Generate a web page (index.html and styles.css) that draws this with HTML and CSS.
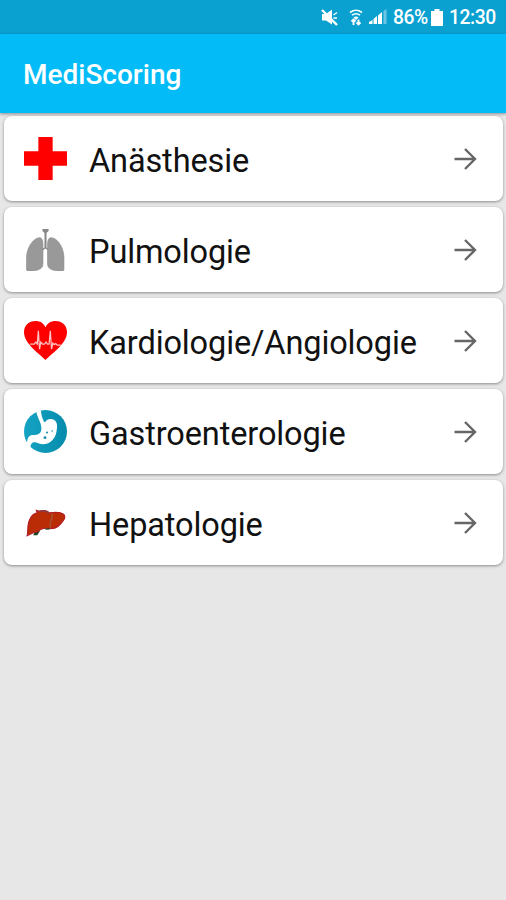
FILE: index.html
```html
<!DOCTYPE html>
<html lang="de">
  <head>
    <meta charset="UTF-8" />
    <meta name="viewport" content="width=device-width, initial-scale=1.0" />
    <title>MediScoring</title>
    <link rel="stylesheet" href="styles.css">
  </head>
  <body>
    <!-- Status Bar -->
    <div class="status-bar">
      <svg class="status-mute" width="17" height="17" viewBox="0 0 17 17" fill="#fff">
        <path d="M1 5h4l6-4.500v15L5 11.500H1z" />
        <path d="M12.500 6l3.500-2.500M12.500 9h3.500" stroke="#fff" stroke-width="1.300" />
        <path d="M1 1l15 15" stroke="#fff" stroke-width="2.400" />
      </svg>
      <svg class="status-wifi" width="14" height="17" viewBox="0 0 14 17" fill="none" stroke="#fff">
        <path d="M1 3.500q6-4.500 12 0M3 6.200q4-3 8 0" stroke-width="1.600" />
        <path d="M4.500 8.500q2.500-1.800 5 0L7 11z" fill="#fff" stroke="none" />
        <path d="M4.500 16v-5M2.500 12.500l2-2 2 2M9.500 10.500v5M7.500 13.500l2 2 2-2" stroke-width="1.900" />
      </svg>
      <svg class="status-signal" width="18" height="16" viewBox="0 0 18 16" fill="#fff">
        <path d="M0 15v-2l3.500-2v4zM4.500 15v-5L8 7v8zM9 15V6.500L13 3v12z" />
        <path d="M14.500 15V2L17.500 0v15z" opacity=".4" />
      </svg>
      <span class="status-percent">86%</span>
      <svg class="status-battery" width="12" height="17" viewBox="0 0 12 17" fill="#fff">
        <path d="M3.500 0h5v2H12v15H0V2h3.500z" />
      </svg>
      <span class="status-time">12:30</span>
    </div>

    <!-- App Bar -->
    <header class="app-bar">
      <h1>MediScoring</h1>
    </header>

    <!-- Category List -->
    <main class="category-list">
      <a href="#" class="category">
        <svg class="category-icon" viewBox="0 0 42 42">
          <path d="M14 0h14v14h14v14H28v14H14V28H0V14h14z" fill="#fe0000" />
        </svg>
        <span class="category-name">Anästhesie</span>
        <svg class="arrow" viewBox="0 0 24 24">
          <path d="M1.500 12h20.500M12 2l10 10-10 10" />
        </svg>
      </a>
      <a href="#" class="category">
        <svg class="category-icon" viewBox="0 0 42 42" fill="#999">
          <path d="M18 1h6v2l-2 2v14l4 3-1 1-4-3-4 3-1-1 4-3V5l-2-2z" fill="#888" />
          <path d="M15.500 9.500C10 9 3 18 2.500 28v13c1 2 7 1 11 0 4-1.500 5-3 5-7V17c0-4-.5-7-3-7.500z" stroke="#888" stroke-width=".6" />
          <path d="M26 9.500C32 9 38.500 18 39 28v13c-1 2-7 1-11 0-4-1.500-5-3-5-7V17c0-4 .5-7 3-7.500z" stroke="#888" stroke-width=".6" />
        </svg>
        <span class="category-name">Pulmologie</span>
        <svg class="arrow" viewBox="0 0 24 24">
          <path d="M1.500 12h20.500M12 2l10 10-10 10" />
        </svg>
      </a>
      <a href="#" class="category">
        <svg class="category-icon" viewBox="0 0 42 42">
          <path d="M21 40C15 34 0 24 0 13 0 6 5 2 11 2c5 0 8 2 10 6 2-4 5-6 10-6 6 0 11 4 11 11 0 11-15 21-21 27z" fill="#fe0000" />
          <path d="M6 24.500h4l1.500-2 1.500 2 1-13 1.200 18 1.200-7 1.600 2h2l1.500-2 1.500 2h1.500l1.200-13 1.200 18 1.200-6 1.400 1.500 1.500-1 1.500 1.500h3.500" fill="none" stroke="#ffc4c4" stroke-width="1.200" />
        </svg>
        <span class="category-name">Kardiologie/Angiologie</span>
        <svg class="arrow" viewBox="0 0 24 24">
          <path d="M1.500 12h20.500M12 2l10 10-10 10" />
        </svg>
      </a>
      <a href="#" class="category">
        <svg class="category-icon" viewBox="0 0 42 42">
          <defs>
            <linearGradient id="teal" x1="0" y1="0" x2="1" y2="0">
              <stop offset="0" stop-color="#16a4c4" />
              <stop offset="1" stop-color="#058bab" />
            </linearGradient>
          </defs>
          <circle cx="21" cy="21" r="21" fill="url(#teal)" />
          <path d="M12 1.500L16.500 .5c.5 4 1 7 3 11 1.500 1 2-2 5-2.500 6-1 9 4 7.500 10-.5 7-4 12-10 14-5 1.500-8-1-11-1.500-3.500-.5-5 2-5 8L3 33c0-6 2-8.500 6-8.500 5 0 8-2 8-6.500 0-6-4-10-5-16.500z" fill="#fff" />
          <g fill="#168eaa">
            <circle cx="20.500" cy="27" r="1.400" />
            <circle cx="22.500" cy="22" r="1" />
            <circle cx="27.500" cy="20.500" r=".8" />
          </g>
        </svg>
        <span class="category-name">Gastroenterologie</span>
        <svg class="arrow" viewBox="0 0 24 24">
          <path d="M1.500 12h20.500M12 2l10 10-10 10" />
        </svg>
      </a>
      <a href="#" class="category">
        <svg class="category-icon" viewBox="0 0 42 42">
          <path d="M9 33.500l2-4 5-1-3 5z" fill="#17451b" />
          <path d="M3 34c1.500-6-.5-11 3-17 2-4 4-5 7-5.500l-1-2.500 3 1c4-1.500 7-1 10 1.500 6-1 10-1 13 1 2.500 1.500 2.500 4 .5 6.500C35 24 32 27 26 27c-5-.5-9-1-12.500 3-4 0-6.500 2-10.500 4z" fill="#ba2c06" stroke="#b3182a" stroke-width="1" />
          <path d="M14 10c4-1 7-.5 10.500 1.500" fill="none" stroke="#7c4450" stroke-width="1.200" />
          <path d="M27.500 12c.5 5-2.500 10-2 14" fill="none" stroke="#a0593f" stroke-width="1.200" />
          <path d="M21 27.500l4-.3" stroke="#17451b" stroke-width="1.200" />
        </svg>
        <span class="category-name">Hepatologie</span>
        <svg class="arrow" viewBox="0 0 24 24">
          <path d="M1.500 12h20.500M12 2l10 10-10 10" />
        </svg>
      </a>
    </main>
  </body>
</html>
```
FILE: styles.css
```css
* {
  margin: 0;
  padding: 0;
  box-sizing: border-box;
}

body {
  min-height: 100vh;
  background-color: #e7e7e7;
  font-family: Roboto, "Open Sans", sans-serif;
}

/* Status Bar */
.status-bar {
  display: flex;
  align-items: center;
  justify-content: flex-end;
  height: 34px;
  padding-right: 10px;
  background-color: #0aa1d1;
  color: #fff;
  font-size: 19.3px;
  line-height: 34px;
}

.status-wifi {
  margin-left: 11px;
}

.status-signal {
  margin-left: 6px;
}

.status-percent,
.status-time {
  padding-top: 2px;
  font-weight: 500;
  letter-spacing: -0.4px;
}

.status-percent {
  width: 34px;
  margin-left: 6px;
}

.status-battery {
  margin-left: 4px;
}

.status-time {
  width: 47px;
  margin-left: 6px;
}

/* App Bar */
.app-bar {
  position: relative;
  display: flex;
  align-items: center;
  height: 79px;
  padding: 2px 23px 0;
  background-color: #03bcf7;
  color: #fff;
  box-shadow: 0 1px 3px rgba(0, 0, 0, 0.4);
}

.app-bar h1 {
  font-size: 28px;
  font-weight: 500;
}

/* Category List */
.category-list {
  display: flex;
  flex-direction: column;
  gap: 6px;
  padding: 3px 3px 0 4px;
}

.category {
  display: flex;
  align-items: center;
  height: 85px;
  padding: 0 26px 0 20px;
  border-radius: 8px;
  background-color: #fff;
  box-shadow: 0 1px 3px rgba(0, 0, 0, 0.4);
  color: #111;
  text-decoration: none;
}

.category-icon {
  width: 43px;
  height: 43px;
  margin-right: 22px;
}

.category-name {
  flex-grow: 1;
  padding-top: 5px;
  font-size: 32.5px;
  letter-spacing: -0.12px;
  white-space: nowrap;
}

.arrow {
  width: 24px;
  height: 24px;
  fill: none;
  stroke: #666;
  stroke-width: 2.4;
}
```
